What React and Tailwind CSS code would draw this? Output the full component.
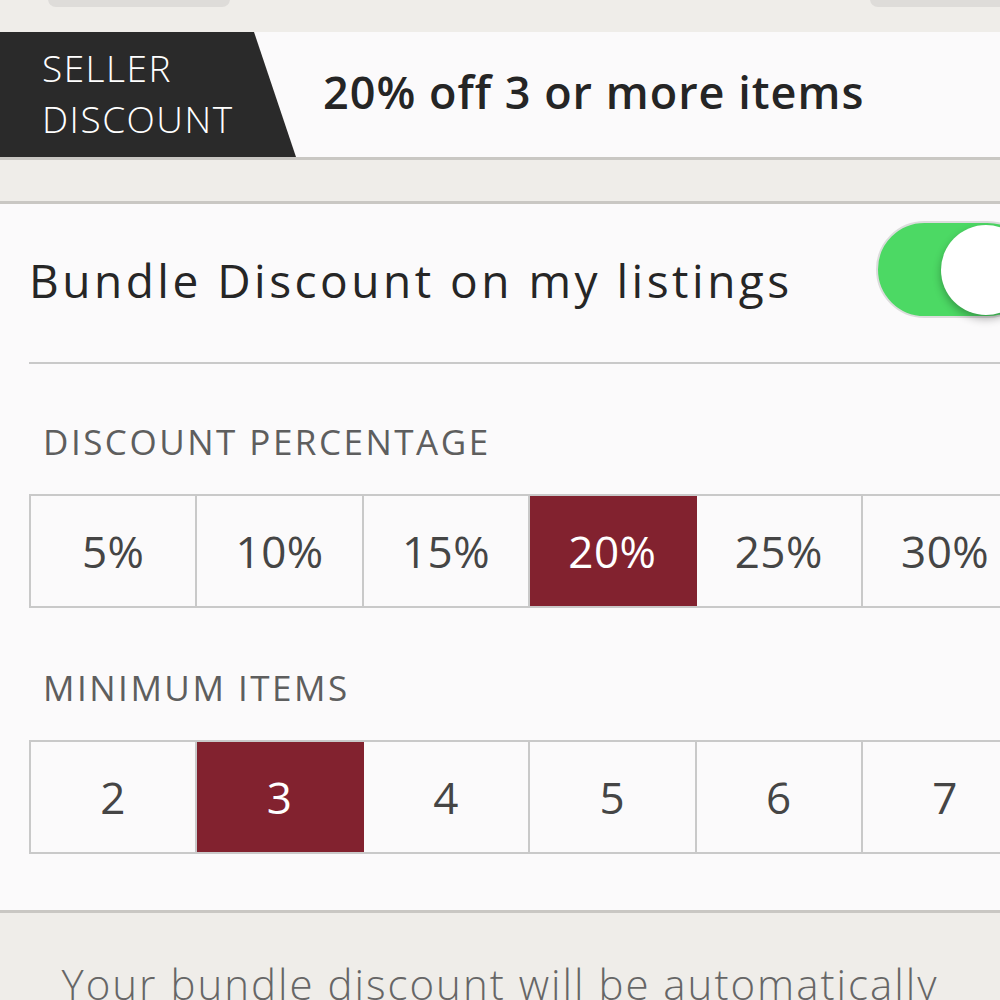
import React, { useState } from "react";

const PERCENTAGES = ["5%", "10%", "15%", "20%", "25%", "30%"];
const MIN_ITEMS = ["2", "3", "4", "5", "6", "7"];

// Row of selectable option cells
const OptionRow = ({ options, selected, onSelect }) => (
  <div className="flex ml-[29px] w-[1000px] border-y-2 border-l-2 border-[#c9c9c9]">
    {options.map((opt) => (
      <button
        key={opt}
        onClick={() => onSelect(opt)}
        className={`w-[166.4px] shrink-0 h-[110px] flex items-center justify-center text-[44px] tracking-[0.5px] border-r-2 ${
          selected === opt
            ? "bg-[#82222f] text-white border-[#82222f]"
            : "text-[#454545] border-[#c9c9c9]"
        }`}
      >
        {opt}
      </button>
    ))}
  </div>
);

const SectionLabel = ({ children, className = "" }) => (
  <div className={`pl-[43px] pb-[32px] text-[35px] tracking-[2.5px] text-[#5e5e5e] leading-[40px] ${className}`}>
    {children}
  </div>
);

const BundleSettings = () => {
  const [enabled, setEnabled] = useState(true);
  const [percent, setPercent] = useState("20%");
  const [minItems, setMinItems] = useState("3");

  return (
    <div
      className="w-[1000px] h-[1000px] overflow-hidden bg-[#efede9]"
      style={{ fontFamily: "'Open Sans', Lato, sans-serif" }}
    >
      {/* top nav remnants */}
      <div className="relative h-[32px]">
        <div className="absolute left-[48px] top-[-10px] w-[182px] h-[17px] rounded-lg bg-[#dedcd9]" />
        <div className="absolute left-[870px] top-[-10px] w-[150px] h-[17px] rounded-lg bg-[#dedcd9]" />
      </div>

      {/* seller discount banner */}
      <div className="flex h-[128px] bg-[#fbfafb] border-b-[3px] border-[#c9c7c3]">
        <div
          className="w-[296px] shrink-0 bg-[#2a2a2a] text-white text-[37px] leading-[51px] pl-[42px] pt-[10px] font-light tracking-[1.5px]"
          style={{ clipPath: "polygon(0 0, 254px 0, 296px 100%, 0 100%)" }}
        >
          <div>SELLER</div>
          <div>DISCOUNT</div>
        </div>
        <div className="flex items-center pl-[27px] text-[45px] font-semibold text-[#252525] pb-[6px] tracking-[1px]">
          20% off 3 or more items
        </div>
      </div>

      <div className="h-[41px]" />

      {/* settings card */}
      <div className="bg-[#fbfafb] border-y-[3px] border-[#c9c7c3] pb-[56px]">
        <div className="flex items-center justify-between h-[160px] ml-[29px] border-b-2 border-[#c9c9c9]">
          <span className="text-[46px] text-[#262626] pb-[6px] tracking-[3.5px] whitespace-nowrap">
            Bundle Discount on my listings
          </span>
          <button
            onClick={() => setEnabled(!enabled)}
            className={`relative shrink-0 w-[160px] h-[97px] mr-[-36px] mb-[28px] rounded-full border-2 border-[#dcdcdc] ${
              enabled ? "bg-[#4cd964]" : "bg-white"
            }`}
          >
            <span
              className={`absolute top-[2px] w-[90px] h-[90px] rounded-full bg-white shadow-[0_4px_8px_rgba(0,0,0,0.3)] ${
                enabled ? "left-[63px]" : "left-[2px]"
              }`}
            />
          </button>
        </div>

        <SectionLabel className="pt-[58px]">DISCOUNT PERCENTAGE</SectionLabel>
        <OptionRow options={PERCENTAGES} selected={percent} onSelect={setPercent} />

        <SectionLabel className="pt-[60px]">MINIMUM ITEMS</SectionLabel>
        <OptionRow options={MIN_ITEMS} selected={minItems} onSelect={setMinItems} />
      </div>

      {/* footer note */}
      <div className="pt-[46px] text-center text-[42px] leading-[50px] tracking-[2px] text-[#666] font-light whitespace-nowrap">
        Your bundle discount will be automatically
      </div>
    </div>
  );
};

export default BundleSettings;
